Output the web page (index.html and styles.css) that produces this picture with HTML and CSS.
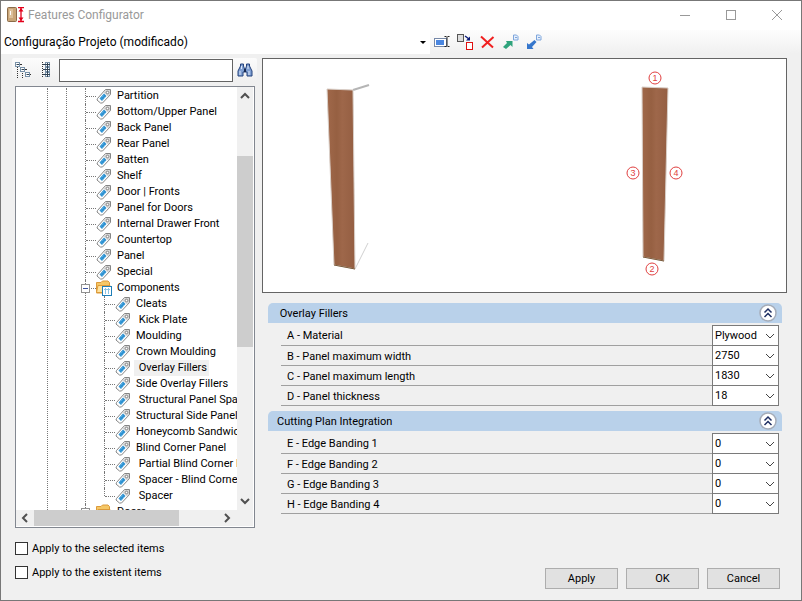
FILE: index.html
```
<!DOCTYPE html>
<html lang="en">

<head>
    <meta charset="utf-8">
    <title>Features Configurator</title>
    <link rel="stylesheet" href="styles.css">
</head>

<body>
    <!-- shared icons -->
    <svg class="defs" aria-hidden="true">
        <symbol id="tag" viewBox="0 0 16 16">
            <path d="M1.500 10.500 L9.500 1.500 L14.500 1.500 L14.500 6.500 L6.500 15 L4.500 15 L1 12Z" fill="#fff" stroke="#858585" />
            <path d="M9.500 2 H14 V6.500 L12 8.500 L7.500 4.500Z" fill="#d6d6d6" />
            <circle cx="11.500" cy="4.500" r="1.300" fill="#fff" stroke="#858585" />
            <path d="M3.500 10.500 L8 5.500 L10.500 8 L6 13Z" fill="#2b8fd0" />
            <path d="M5 10.500 L8 7 M6.500 11.500 L9.500 8.500" stroke="#6cc0ee" stroke-dasharray="1 1" />
        </symbol>
        <symbol id="folder" viewBox="0 0 16 16">
            <path d="M.5 2.500 H5 L6.500 1 H12 L13.500 2.500 V13 H.5Z" fill="#f5c766" stroke="#dc9a3a" />
            <path d="M2 5.500 H14 L12 12.500 H.5Z" fill="#ffe3a0" stroke="#dc9a3a" />
            <rect x="6.500" y="6.500" width="9" height="9" fill="#fff" stroke="#1e7fb8" />
            <path d="M8 9.500 H14 M9.500 8 V14 M12.500 8 V14" stroke="#8cc4e4" />
        </symbol>
        <symbol id="chev" viewBox="0 0 10 10">
            <path d="M1 3 L5 7 L9 3" fill="none" stroke="currentColor" />
        </symbol>
        <symbol id="fold" viewBox="0 0 18 18">
            <circle cx="9" cy="9" r="8" fill="#fff" stroke="#a5acb8" stroke-width="1.500" />
            <path d="M5.500 8.500 L9 5 L12.500 8.500 M5.500 13 L9 9.500 L12.500 13" fill="none" stroke="#1f2f63" stroke-width="1.500" />
        </symbol>
    </svg>

    <div class="window">
        <div class="titlebar">
            <svg width="18" height="16" viewBox="0 0 18 16">
                <rect x=".5" y=".5" width="9" height="14" rx="1" fill="#c9a578" stroke="#8a6b48" />
                <rect x="2" y="2" width="4" height="9" fill="#dcc09a" />
                <path d="M3.500 4 V8" stroke="#fff" />
                <path d="M11 .5 H17 M11 14.500 H17 M14 1 V14" stroke="#e2001a" stroke-width="1.300" />
                <path d="M11.500 4.500 L14 1 L16.500 4.500Z M11.500 10.500 L14 14 L16.500 10.500Z" fill="#e2001a" />
            </svg>
            <span class="title">Features Configurator</span>
            <button class="win-btn" aria-label="Minimize"><svg width="12" height="12"><path d="M1 6.500 H11" stroke="#999" /></svg></button>
            <button class="win-btn" aria-label="Maximize"><svg width="12" height="12"><rect x="1.500" y="1.500" width="9" height="9" fill="none" stroke="#999" /></svg></button>
            <button class="win-btn" aria-label="Close"><svg width="12" height="12"><path d="M1 1 L11 11 M11 1 L1 11" stroke="#999" /></svg></button>
        </div>

        <div class="toolbar">
            <div class="config">
                <select aria-label="Configuration">
                    <option>Configuração Projeto (modificado)</option>
                </select>
            </div>
            <button class="tool" aria-label="Rename">
                <svg width="16" height="16">
                    <rect x=".5" y="4.500" width="12" height="8" fill="#fff" stroke="#7688a8" />
                    <rect x="2" y="6" width="8" height="5" fill="#4a86e0" />
                    <path d="M10.500 2.500 H12.500 M13.500 2.500 H15.500 M13 3 V12 M10.500 12.500 H12.500 M13.500 12.500 H15.500" stroke="#222" />
                </svg>
            </button>
            <button class="tool" aria-label="Replace">
                <svg width="16" height="16">
                    <rect x=".5" y=".5" width="6" height="7" fill="#ddd" stroke="#555" />
                    <path d="M8 2 L12 5" stroke="#0a1a78" stroke-width="1.300" />
                    <path d="M13 2.500 V6.500 H9Z" fill="#0a1a78" />
                    <rect x="9.500" y="8.500" width="6" height="7" fill="#fff" stroke="#e01010" />
                </svg>
            </button>
            <button class="tool" aria-label="Delete">
                <svg width="16" height="16"><path d="M1 2.500 L13 13.500 M13.500 3 L2 13.500" stroke="#f02020" stroke-width="2" /></svg>
            </button>
            <button class="tool" aria-label="Export">
                <svg width="16" height="16">
                    <path d="M0 13 L4 9 L3 7 H9.500 V13 L7.500 11 L3 15Z" fill="#2fa37c" />
                    <path d="M10.500 1 H13.500 L15 2.500 V6 H10.500Z M12 3.500 H14" fill="#e6effc" stroke="#7ea6dc" />
                </svg>
            </button>
            <button class="tool" aria-label="Import">
                <svg width="16" height="16">
                    <path d="M1 15 V9 L3 10.500 L8.500 6 L10.500 8 L6 13 L7.500 15Z" fill="#3576cc" />
                    <path d="M10.500 1 H13.500 L15 2.500 V6 H10.500Z M12 3.500 H14" fill="#e6effc" stroke="#7ea6dc" />
                </svg>
            </button>
        </div>

        <div class="main">
            <div class="side">
                <div class="search">
                    <button class="tool" aria-label="Collapse all">
                        <svg width="16" height="16" fill="#fff" stroke="#7891a8">
                            <path d="M2.500 5 V16 M7.500 9 V16" stroke="#333" stroke-dasharray="1 1" />
                            <path d="M5 2.500 H7 M10 7.500 H12 M14 12.500 H16" stroke="#333" />
                            <rect x=".5" y=".5" width="4" height="4" /><rect x="5.500" y="5.500" width="4" height="4" /><rect x="10.500" y="10.500" width="4" height="4" />
                            <path d="M1.500 2.500 H4 M6.500 7.500 H9 M11.500 12.500 H14" stroke="#345" />
                        </svg>
                    </button>
                    <button class="tool" aria-label="Expand all">
                        <svg width="16" height="16" fill="#fff" stroke="#7891a8">
                            <path d="M4.500 0 V16" stroke="#333" stroke-dasharray="1 1" />
                            <rect x="7.500" y=".5" width="4" height="4" /><rect x="7.500" y="5.500" width="4" height="4" /><rect x="7.500" y="10.500" width="4" height="4" />
                            <path d="M5 2.500 H12 M5 7.500 H12 M5 12.500 H12 M9.500 1 V15" stroke="#345" />
                        </svg>
                    </button>
                    <input type="text" aria-label="Search">
                    <button class="tool" aria-label="Find">
                        <svg width="16" height="16">
                            <path d="M1 9 L3.500 4 V2 H6.500 V4 L7.500 7 H8.500 L9.500 4 V2 H12.500 V4 L15 9 V14 H10 V10 H6 V14 H1Z" fill="#7f9fd2" stroke="#25427c" />
                            <path d="M3 9 V13 M12 9 V13 M4.500 4 V7 M11 4 V7" stroke="#dbe7fa" />
                            <path d="M7 8.500 H9" stroke="#16284f" stroke-width="3" />
                        </svg>
                    </button>
                </div>

                <div class="tree">
                    <div class="view">
                        <ul><li><ul><li><ul>
                            <li><div class="node"><svg><use href="#tag" /></svg><span>Partition</span></div></li>
                            <li><div class="node"><svg><use href="#tag" /></svg><span>Bottom/Upper Panel</span></div></li>
                            <li><div class="node"><svg><use href="#tag" /></svg><span>Back Panel</span></div></li>
                            <li><div class="node"><svg><use href="#tag" /></svg><span>Rear Panel</span></div></li>
                            <li><div class="node"><svg><use href="#tag" /></svg><span>Batten</span></div></li>
                            <li><div class="node"><svg><use href="#tag" /></svg><span>Shelf</span></div></li>
                            <li><div class="node"><svg><use href="#tag" /></svg><span>Door | Fronts</span></div></li>
                            <li><div class="node"><svg><use href="#tag" /></svg><span>Panel for Doors</span></div></li>
                            <li><div class="node"><svg><use href="#tag" /></svg><span>Internal Drawer Front</span></div></li>
                            <li><div class="node"><svg><use href="#tag" /></svg><span>Countertop</span></div></li>
                            <li><div class="node"><svg><use href="#tag" /></svg><span>Panel</span></div></li>
                            <li><div class="node"><svg><use href="#tag" /></svg><span>Special</span></div></li>
                            <li>
                                <div class="node"><button class="toggle" aria-label="Collapse"></button><svg><use href="#folder" /></svg><span>Components</span></div>
                                <ul>
                                    <li><div class="node"><svg><use href="#tag" /></svg><span>Cleats</span></div></li>
                                    <li><div class="node"><svg><use href="#tag" /></svg><span> Kick Plate</span></div></li>
                                    <li><div class="node"><svg><use href="#tag" /></svg><span>Moulding</span></div></li>
                                    <li><div class="node"><svg><use href="#tag" /></svg><span>Crown Moulding</span></div></li>
                                    <li><div class="node"><svg><use href="#tag" /></svg><span class="selected"> Overlay Fillers</span></div></li>
                                    <li><div class="node"><svg><use href="#tag" /></svg><span>Side Overlay Fillers</span></div></li>
                                    <li><div class="node"><svg><use href="#tag" /></svg><span> Structural Panel Spa</span></div></li>
                                    <li><div class="node"><svg><use href="#tag" /></svg><span>Structural Side Panel</span></div></li>
                                    <li><div class="node"><svg><use href="#tag" /></svg><span>Honeycomb Sandwic</span></div></li>
                                    <li><div class="node"><svg><use href="#tag" /></svg><span>Blind Corner Panel</span></div></li>
                                    <li><div class="node"><svg><use href="#tag" /></svg><span> Partial Blind Corner P</span></div></li>
                                    <li><div class="node"><svg><use href="#tag" /></svg><span> Spacer - Blind Corne</span></div></li>
                                    <li><div class="node"><svg><use href="#tag" /></svg><span> Spacer</span></div></li>
                                </ul>
                            </li>
                            <li><div class="node"><button class="toggle" aria-label="Collapse"></button><svg><use href="#folder" /></svg><span>Doors</span></div></li>
                            <li></li>
                        </ul></li></ul></li></ul>
                    </div>
                    <div class="vbar">
                        <svg class="up"><use href="#chev" /></svg>
                        <div class="thumb"></div>
                        <svg><use href="#chev" /></svg>
                    </div>
                    <div class="hbar">
                        <svg class="left"><use href="#chev" /></svg>
                        <div class="thumb"></div>
                        <svg class="right"><use href="#chev" /></svg>
                    </div>
                </div>
            </div>

            <div class="content">
                <div class="preview">
                    <svg viewBox="0 0 523 233">
                        <defs>
                            <linearGradient id="wood">
                                <stop offset="0" stop-color="#a0684a" />
                                <stop offset=".35" stop-color="#966042" />
                                <stop offset=".55" stop-color="#9e674a" />
                                <stop offset="1" stop-color="#945e42" />
                            </linearGradient>
                        </defs>
                        <!-- 3d view -->
                        <path d="M90 31 L106 26" stroke="#b5b5b5" stroke-width="2" />
                        <path d="M92 210 L105 184" stroke="#d0d0d0" />
                        <path d="M64 30 L90 31 L92 210 L71 206Z" fill="url(#wood)" stroke="#d9cfc8" />
                        <path d="M71 206 L92 210" stroke="#7a5a3a" />
                        <!-- front view with edge numbers -->
                        <path d="M379 28 L405 29 L401 202 L380 198Z" fill="url(#wood)" stroke="#d9cfc8" />
                        <path d="M380 198 L401 202" stroke="#7a5a3a" />
                        <g fill="none" stroke="#e04040">
                            <circle cx="392" cy="19" r="6" />
                            <circle cx="389" cy="210" r="6" />
                            <circle cx="370" cy="114" r="6" />
                            <circle cx="413" cy="114" r="6" />
                        </g>
                        <g class="marks">
                            <text x="392" y="22">1</text>
                            <text x="389" y="213">2</text>
                            <text x="370" y="117">3</text>
                            <text x="413" y="117">4</text>
                        </g>
                    </svg>
                </div>

                <div class="section">
                    <div class="section-head"><span> Overlay Fillers</span><button aria-label="Collapse"><svg><use href="#fold" /></svg></button></div>
                    <div class="props">
                        <div class="prop"><label for="a">A - Material</label><div class="combo"><select id="a"><option>Plywood</option></select><svg><use href="#chev" /></svg></div></div>
                        <div class="prop"><label for="b">B - Panel maximum width</label><div class="combo"><select id="b"><option>2750</option></select><svg><use href="#chev" /></svg></div></div>
                        <div class="prop"><label for="c">C - Panel maximum length</label><div class="combo"><select id="c"><option>1830</option></select><svg><use href="#chev" /></svg></div></div>
                        <div class="prop"><label for="d">D - Panel thickness</label><div class="combo"><select id="d"><option>18</option></select><svg><use href="#chev" /></svg></div></div>
                    </div>
                </div>

                <div class="section">
                    <div class="section-head"><span>Cutting Plan Integration</span><button aria-label="Collapse"><svg><use href="#fold" /></svg></button></div>
                    <div class="props">
                        <div class="prop"><label for="e">E - Edge Banding 1</label><div class="combo"><select id="e"><option>0</option></select><svg><use href="#chev" /></svg></div></div>
                        <div class="prop"><label for="f">F - Edge Banding 2</label><div class="combo"><select id="f"><option>0</option></select><svg><use href="#chev" /></svg></div></div>
                        <div class="prop"><label for="g">G - Edge Banding 3</label><div class="combo"><select id="g"><option>0</option></select><svg><use href="#chev" /></svg></div></div>
                        <div class="prop"><label for="h">H - Edge Banding 4</label><div class="combo"><select id="h"><option>0</option></select><svg><use href="#chev" /></svg></div></div>
                    </div>
                </div>
            </div>
        </div>

        <div class="footer">
            <div class="checks">
                <label><input type="checkbox">Apply to the selected items</label>
                <label><input type="checkbox">Apply to the existent items</label>
            </div>
            <div class="buttons">
                <button>Apply</button>
                <button>OK</button>
                <button>Cancel</button>
            </div>
        </div>
    </div>
</body>

</html>
```
FILE: styles.css
```
* {
    box-sizing: border-box;
}

body {
    margin: 0;
    font-family: Roboto, "Liberation Sans", Arial, sans-serif;
    font-size: 11px;
    color: #000;
    background-color: #f0f0f0;
}

button,
select,
input {
    font: inherit;
    color: inherit;
    margin: 0;
    padding: 0;
    border: 0;
    border-radius: 0;
    background: none;
}

select {
    appearance: none;
    display: block;
    width: 100%;
    height: 100%;
}

svg {
    display: block;
    flex: none;
}

.defs {
    position: absolute;
    width: 0;
    height: 0;
}

.window {
    display: flex;
    flex-direction: column;
    height: 100vh;
    border: 1px solid #777;
}

/* title bar */
.titlebar {
    display: flex;
    align-items: center;
    height: 29px;
    padding: 0 1px 2px 6px;
    background-color: #fff;
}

.title {
    flex: 1;
    margin-left: 3px;
    font-size: 12px;
    color: #999;
}

.win-btn {
    display: flex;
    align-items: center;
    justify-content: center;
    width: 46px;
    height: 28px;
}

/* toolbar */
.toolbar {
    display: flex;
    align-items: center;
    height: 24px;
    background: linear-gradient(#fdfdfd, #f0f0f0);
}

.config {
    position: relative;
    width: 429px;
    height: 24px;
    margin-right: 4px;
    background-color: #fff;
}

.config select {
    padding-left: 3px;
    font-size: 12px;
}

.config::after {
    content: "";
    position: absolute;
    right: 4px;
    top: 11px;
    border: 3px solid transparent;
    border-top-color: #000;
    border-bottom: 0;
}

.tool {
    width: 16px;
    height: 16px;
}

.tool + .tool {
    margin-left: 7px;
}

/* main area */
.main {
    flex: 1;
    display: flex;
    gap: 5px;
    min-height: 0;
    padding: 4px 14px 0 11px;
}

.side {
    display: flex;
    flex-direction: column;
    width: 245px;
}

.search {
    display: flex;
    align-items: center;
    height: 24px;
    margin-bottom: 4px;
    padding: 0 4px 0 3px;
    border-radius: 2px;
    background: linear-gradient(#fcfcfc, #f0f0f0);
}

.search input {
    flex: 1;
    min-width: 0;
    height: 23px;
    margin: 0 4px 0 5px;
    padding: 0 3px;
    border: 1px solid #646464;
    background-color: #fff;
}

/* tree */
.tree {
    flex: 1;
    display: grid;
    grid-template-columns: 1fr 16px;
    grid-template-rows: 1fr 16px;
    min-height: 0;
    margin: 0 2px 0 3px;
    padding-right: 1px;
    padding-bottom: 1px;
    border: 1px solid #828790;
    background-color: #fff;
}

.view {
    min-width: 0;
    min-height: 0;
    padding: 1px 0 0 13px;
    overflow: hidden;
}

.view ul {
    margin: 0;
    padding: 0 0 0 18px;
    list-style: none;
}

.view li {
    position: relative;
    min-height: 16px;
    padding-left: 1px;
}

.view li::before {
    content: "";
    position: absolute;
    left: 0;
    top: 0;
    bottom: 0;
    border-left: 1px dotted #777;
}

.view li li li li:last-child::before {
    bottom: 8px;
}

.node {
    display: flex;
    align-items: center;
    height: 16px;
    white-space: pre;
}

.node::before {
    content: "";
    width: 10px;
    flex: none;
    border-top: 1px dotted #777;
}

.node svg {
    width: 16px;
    height: 16px;
}

.node span {
    margin-left: 3px;
    padding: 0 2px;
    line-height: 16px;
}

.node .selected {
    background-color: #f0f0f0;
}

.toggle {
    position: absolute;
    left: -4px;
    top: 4px;
    width: 9px;
    height: 9px;
    border: 1px solid #919191;
    background: linear-gradient(#3c52a0, #3c52a0) center / 5px 1px no-repeat #fff;
}

.vbar,
.hbar {
    display: flex;
    align-items: center;
    background-color: #f0f0f0;
    color: #505050;
}

.vbar {
    flex-direction: column;
    justify-content: space-between;
    padding: 4px 0;
}

.hbar {
    grid-column: 1 / 3;
    padding: 0 4px;
}

.vbar svg,
.hbar svg {
    width: 10px;
    height: 10px;
    stroke-width: 2;
}

.thumb {
    background-color: #cdcdcd;
}

.vbar .thumb {
    width: 16px;
    height: 46%;
    margin-bottom: 94px;
}

.hbar .thumb {
    width: 145px;
    height: 16px;
    margin-left: 4px;
}

.up {
    transform: rotate(180deg);
}

.left {
    transform: rotate(90deg);
}

.right {
    margin-left: auto;
    margin-right: 17px;
    transform: rotate(-90deg);
}

/* right side */
.content {
    flex: 1;
    min-width: 0;
}

.preview {
    height: 235px;
    margin-bottom: 10px;
    border: 1px solid #646464;
    background-color: #fff;
}

.preview svg {
    width: 100%;
    height: 233px;
}

.marks {
    font-family: "Liberation Sans", Arial, sans-serif;
    font-size: 9px;
    fill: #e04040;
    text-anchor: middle;
}

.section {
    margin: 0 5px 5px 6px;
}

.section-head {
    display: flex;
    align-items: center;
    justify-content: space-between;
    height: 20px;
    padding: 0 5px 0 9px;
    border-radius: 5px 5px 0 0;
    background-color: #b9d1ea;
    white-space: pre;
}

.section-head svg {
    width: 18px;
    height: 18px;
}

.props {
    margin: 2px 3px 0 13px;
}

.prop {
    display: flex;
    height: 20px;
}

.prop:first-child {
    height: 21px;
}

.prop label {
    flex: 1;
    padding-left: 6px;
    line-height: 21px;
    border-bottom: 1px solid #a0a0a0;
}

.combo {
    position: relative;
    width: 67px;
    border: 1px solid #7a7a7a;
    border-top: 0;
    background-color: #fff;
}

.prop:first-child .combo {
    border-top: 1px solid #7a7a7a;
}

.combo select {
    padding-left: 2px;
}

.combo svg {
    position: absolute;
    right: 3px;
    top: 5px;
    width: 10px;
    height: 10px;
    color: #444;
    pointer-events: none;
}

/* bottom */
.footer {
    display: flex;
    align-items: flex-end;
    justify-content: space-between;
    padding: 12px 21px 11px 14px;
}

.checks {
    display: flex;
    flex-direction: column;
    gap: 8px;
    margin-bottom: 9px;
}

.checks label {
    display: flex;
    align-items: center;
    gap: 4px;
    height: 16px;
}

.checks input {
    appearance: none;
    width: 13px;
    height: 13px;
    border: 1px solid #333;
    background-color: #fff;
}

.buttons {
    display: flex;
    gap: 8px;
}

.buttons button {
    width: 73px;
    height: 21px;
    border: 1px solid #adadad;
    background-color: #e1e1e1;
}
```
